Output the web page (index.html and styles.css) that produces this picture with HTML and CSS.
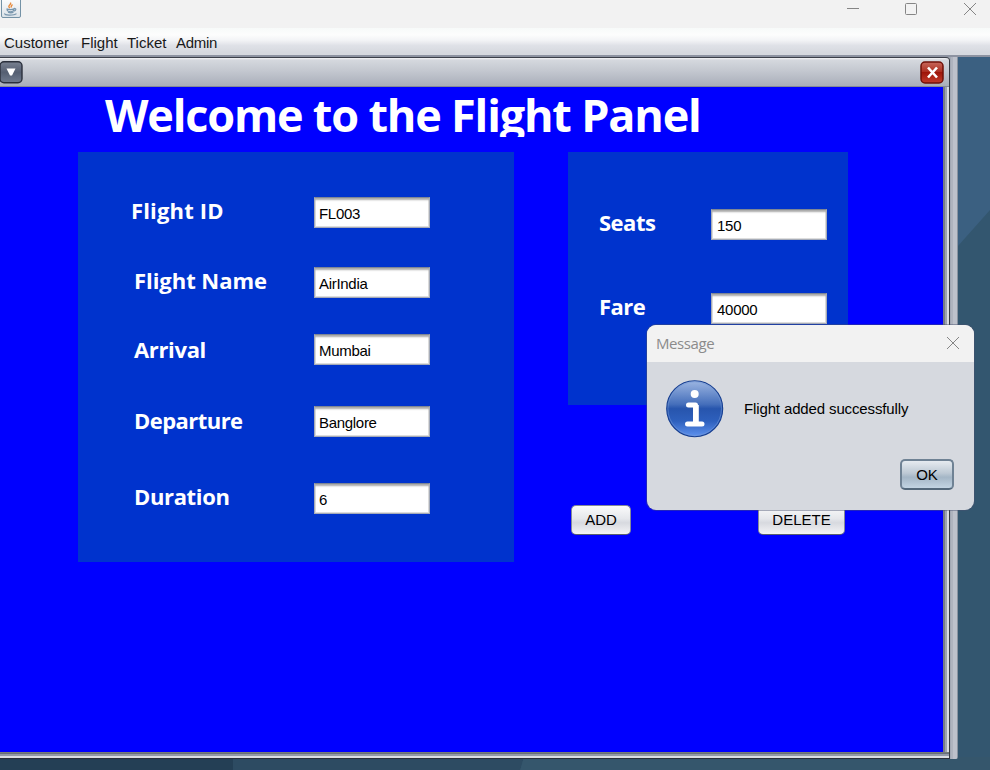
FILE: index.html
```html
<!DOCTYPE html>
<html lang="en">
<head>
<meta charset="utf-8">
<title>Flight Panel</title>
<link rel="stylesheet" href="styles.css">
</head>
<body>
<header class="titlebar">
  <svg class="java" width="22" height="19" viewBox="0 0 22 19">
    <defs><linearGradient id="tile" x1="0" y1="0" x2="0" y2="1"><stop offset="0" stop-color="#fff"/><stop offset="1" stop-color="#dbe2e8"/></linearGradient></defs>
    <rect x="1.5" y="-3" width="19" height="20.5" rx="1.5" fill="url(#tile)" stroke="#7492a6"/>
    <path d="M10 8C6.500 5.500 12 5 10.500 2.500M11.500 7.500C10.500 6 11.500 5.500 12.500 4.500" fill="none" stroke="#e88a3c" stroke-width="1.400"/>
    <path d="M6.500 8.800c2 .8 6 .8 8-.2M7 9.500c.3 3 6.500 3 7 0M14 8.500c2.500-.5 2.500 2.300-.3 2.700M8 12.300c2 .7 4 .6 5.500 0M5 13.300c-2 2.300 9 2.300 11.500.3" fill="none" stroke="#7896ad" stroke-width="1.200"/>
  </svg>
  <svg class="controls" width="132" height="20" viewBox="0 0 132 20" fill="none" stroke="#858585">
    <path d="M0 8.500h12"/><rect x="58.500" y="3.500" width="11" height="11" rx="1"/><path d="M117 3l12 12M129 3L117 15"/>
  </svg>
</header>
<nav class="menubar"><span class="m1">Customer</span><span class="m2">Flight</span><span class="m3">Ticket</span><span>Admin</span></nav>
<main class="desktop">
  <svg class="wallpaper" width="990" height="714" viewBox="0 0 990 714">
    <rect width="990" height="714" fill="#33566f"/>
    <path d="M950 0h40v153l-40 45z" fill="#3b6081"/>
    <path d="M0 700h235v14H0z" fill="#243f55"/><path d="M233 700h291l-4 14H233z" fill="#2d4b62"/>
    <path d="M524 700h466v14H520z" fill="#35566c"/>
  </svg>
  <div class="back-frame"></div>
  <section class="frame">
    <div class="frame-title">
      <svg width="23" height="23" viewBox="0 0 23 23"><defs><linearGradient id="menu" x1="0" y1="0" x2="0" y2="1"><stop stop-color="#798191"/><stop offset=".5" stop-color="#555f72"/><stop offset="1" stop-color="#707b8e"/></linearGradient></defs><rect x="0" y=".8" width="22" height="21" rx="4" fill="url(#menu)" stroke="#2b303c" stroke-width="1.400"/><path d="M6.500 7.500h9l-3.500 7h-2z" fill="#fff"/></svg>
      <svg width="24" height="24" viewBox="0 0 24 24"><defs><linearGradient id="close" x1="0" y1="0" x2="0" y2="1"><stop stop-color="#c7685c"/><stop offset=".45" stop-color="#ae3022"/><stop offset=".5" stop-color="#9e1509"/><stop offset="1" stop-color="#c33c2b"/></linearGradient></defs><rect x="1" y="1" width="22" height="21" rx="4" fill="url(#close)" stroke="#701008" stroke-width="1.500"/><path d="M8 6.500l9 10M17 6.500l-9 10" stroke="#fff" stroke-width="2.600"/></svg>
    </div>
    <div class="content">
      <h1><span>Welcome to the Flight Panel</span></h1>
      <div class="columns">
        <form class="panel details">
          <label class="row first"><span>Flight ID</span><b>FL003</b></label>
          <label class="row second"><span>Flight Name</span><b>AirIndia</b></label>
          <label class="row level"><span>Arrival</span><b>Mumbai</b></label>
          <label class="row departure"><span>Departure</span><b>Banglore</b></label>
          <label class="row"><span>Duration</span><b>6</b></label>
        </form>
        <div class="side">
          <form class="panel booking">
            <label class="row"><span>Seats</span><b>150</b></label>
            <label class="row"><span>Fare</span><b>40000</b></label>
          </form>
          <div class="actions"><button class="btn add">ADD</button><button class="btn delete">DELETE</button></div>
        </div>
      </div>
    </div>
  </section>
</main>
<aside class="dialog">
  <div class="dialog-title"><span>Message</span><svg width="14" height="14" viewBox="0 0 14 14" fill="none" stroke="#858585"><path d="M1 1l12 12M13 1L1 13"/></svg></div>
  <div class="dialog-body">
    <svg width="58" height="58" viewBox="0 0 58 58"><defs><linearGradient id="info" x1="0" y1="0" x2="0" y2="1"><stop stop-color="#9db6e2"/><stop offset=".42" stop-color="#456fbb"/><stop offset=".5" stop-color="#2755ad"/><stop offset=".72" stop-color="#2e60bd"/><stop offset="1" stop-color="#5e92ef"/></linearGradient></defs><circle cx="28.700" cy="28.700" r="28" fill="url(#info)" stroke="#173f91" stroke-width="1.100"/><circle cx="28.700" cy="28.700" r="26.800" fill="none" stroke="#7599d6" stroke-opacity=".55"/><circle cx="28.700" cy="14" r="4" fill="#fff"/><path d="M22.500 25H29.500V44M21.500 44H36" fill="none" stroke="#fff" stroke-width="5" stroke-linecap="round" stroke-linejoin="round"/><path d="M27 25h5.800v19H27z" fill="#fff"/></svg>
    <p>Flight added successfully</p>
  </div>
  <div class="dialog-actions"><button class="btn ok">OK</button></div>
</aside>
</body>
</html>
```
FILE: styles.css
```css
* { box-sizing: border-box; }
body { margin: 0; width: 990px; height: 770px; overflow: hidden; position: relative; background: #33566f; font: 15px/20px "Liberation Sans", Arial, sans-serif; color: #000; }
svg { display: block; flex: none; }
.titlebar { height: 28px; background: #f2f2f2; display: flex; justify-content: space-between; padding-right: 11px; }
.menubar { height: 29px; display: flex; padding: 5px 0 0 4px; color: #191919; background: linear-gradient(#f7faf9, #fdfdfd 25%, #f3f4f6 45%, #dfe1e7 65%, #d6d9df 90%); border-bottom: 2px solid #8d93a1; }
.m1 { width: 77px; }
.m2 { width: 46px; }
.m3 { width: 49px; }
.menubar span:last-child { letter-spacing: -.3px; }
.desktop { height: 713px; position: relative; }
.wallpaper { position: absolute; left: 0; top: 0; }
.back-frame { position: absolute; left: 0; top: 0; width: 958px; height: 702px; background: linear-gradient(90deg, #a2a8b4 0 951px, #aeb3be 951px 953px, #bdc1cb 953px 957px, #8993a0 957px); border-radius: 0 0 2px 0; }
.frame { position: relative; width: 950px; height: 702px; border-top: 1px solid #3b3f49; border-right: 1px solid #343941; border-bottom: 1px solid #292f3a; border-radius: 0 4px 0 0; background: linear-gradient(90deg, #737985 0 943px, #777c85 943px 945px, #9da3af 945px 947px, #d9dce1 947px); }
.frame-title { height: 29px; display: flex; align-items: flex-start; justify-content: space-between; padding: 3px 5px 0 0; background: linear-gradient(#f4f5f6, #d5d8de 2px, #c4c8d0 45%, #a9aeb9); border-bottom: 1px solid #858b96; border-radius: 0 4px 0 0; }
.content { height: 665px; width: 943px; background: #00f; }
.frame::after { content: ""; display: block; height: 6px; background: linear-gradient(#777c78 0 1px, #676e79 1px 2px, #9299a6 2px 4px, #d9dce1 4px); }
h1 { margin: 0; height: 65px; font: bold 45px/56px "Open Sans", "Noto Sans", sans-serif; letter-spacing: -1.18px; color: #fff; }
h1 span { display: block; height: 50px; overflow: hidden; padding-left: 105px; white-space: nowrap; }
.columns { display: flex; gap: 54px; padding-left: 78px; }
.panel { background: #0033cd; }
.details { width: 436px; height: 410px; padding: 45px 0 0 56px; display: grid; grid-template-rows: 70px 67px 72px 77px 31px; }
.booking { width: 280px; height: 253px; padding: 57px 0 0 31px; display: grid; grid-template-rows: 84px 31px; }
.row { display: flex; align-items: flex-start; }
.row span { width: 180px; font: bold 22px/30px "Open Sans", "Noto Sans", sans-serif; letter-spacing: -.35px; color: #fff; white-space: nowrap; margin-top: -2px; }
.row.level span { margin-top: 0; }
.row.departure span { margin-top: -1px; letter-spacing: -.55px; }
.row.second span { letter-spacing: -.05px; }
.row.first span { margin-left: -3px; width: 183px; letter-spacing: .15px; }
.booking .row span { width: 112px; letter-spacing: -.5px; }
.row b { width: 116px; height: 31px; padding: 1px 0 0 4px; font-weight: normal; line-height: 29px; background: #fff; border: 1px solid #a5abb8; border-top-color: #7f8795; box-shadow: inset 0 3px 2px -1px #aaa, inset 0 0 0 1px #ddd; letter-spacing: -.3px; }
.booking .row b { padding-left: 5px; letter-spacing: -.25px; }
.actions { display: flex; justify-content: space-between; padding: 100px 3px 0; }
.btn { font: 15px/20px "Liberation Sans", Arial, sans-serif; color: #000; padding: 0; height: 30px; border: 1px solid #858b98; border-bottom-color: #5a606e; border-radius: 5px; background: linear-gradient(#fafafb, #e5e7eb 45%, #d7d9df 60%, #f3f4f6); }
.add { width: 60px; }
.delete { width: 87px; }
.dialog { position: absolute; left: 647px; top: 325px; width: 327px; height: 185px; border-radius: 9px; overflow: hidden; background: #d6d9df; box-shadow: 0 0 0 1px rgba(70, 80, 110, .45); }
.dialog-title { height: 37px; background: #f2f2f2; display: flex; justify-content: space-between; padding: 11px 14px 0 9px; font: 15px/15px "Open Sans", "Noto Sans", sans-serif; letter-spacing: -.4px; color: #8b8b8b; }
.dialog-body { display: flex; padding: 18px 0 0 19px; gap: 20px; }
.dialog-body p { margin: 19px 0 0; white-space: nowrap; letter-spacing: -.13px; }
.dialog-actions { display: flex; justify-content: flex-end; padding: 21px 20px 0 0; }
.ok { width: 54px; height: 31px; border: 2px solid #6f8294; border-bottom-color: #53687b; background: linear-gradient(#e6ebf0, #bdc9d4 45%, #a4b6c6 60%, #c2d4e3); }
```
